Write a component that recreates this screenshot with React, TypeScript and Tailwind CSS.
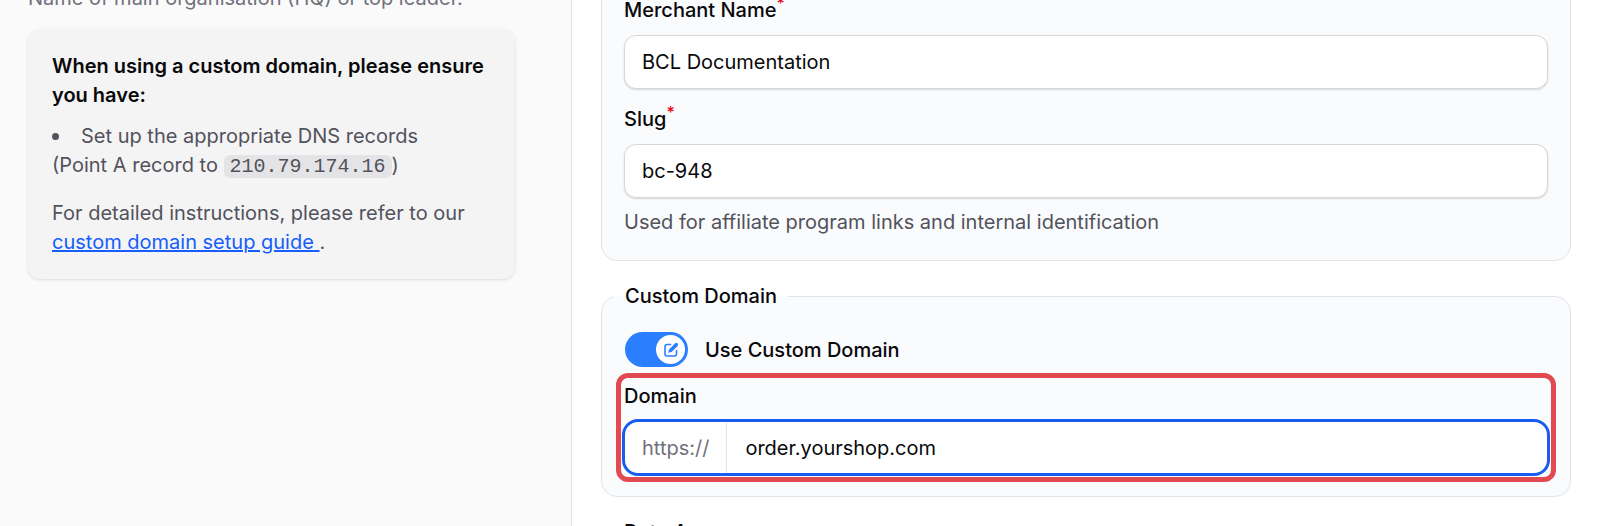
import { useState } from "react";
import type { ReactNode } from "react";

function FieldLabel({ htmlFor, required, children }: { htmlFor: string; required?: boolean; children: ReactNode }) {
  return (
    <label htmlFor={htmlFor} className="block text-xl leading-7 font-medium text-zinc-950">
      {children}
      {required && <sup className="text-base leading-none text-red-600">*</sup>}
    </label>
  );
}

function TextField({ id, label, defaultValue }: { id: string; label: string; defaultValue: string }) {
  return (
    <div className="flex flex-col gap-[11px]">
      <FieldLabel htmlFor={id} required>
        {label}
      </FieldLabel>
      <input
        id={id}
        type="text"
        defaultValue={defaultValue}
        className="h-[54px] w-full rounded-xl border border-[#d8d8da] bg-white px-[17px] text-xl text-zinc-950 shadow-[0_1px_2px_rgba(0,0,0,0.15)] outline-none"
      />
    </div>
  );
}

function EditToggle({ checked, onChange }: { checked: boolean; onChange: (value: boolean) => void }) {
  return (
    <label className="flex items-center gap-[17px] text-xl leading-7 font-medium text-zinc-950">
      <input
        type="checkbox"
        role="switch"
        checked={checked}
        onChange={(e) => onChange(e.target.checked)}
        className="peer sr-only"
      />
      <span className="flex h-[35px] w-[63px] items-center rounded-full bg-gray-300 px-[3px] peer-checked:justify-end peer-checked:bg-[#2b7fff]">
        <span className="flex size-[29px] items-center justify-center rounded-full bg-white">
          <svg viewBox="0 0 16 16" className="size-4" fill="none" stroke="#2b7fff">
            <path
              d="M7.5 2.5H4A2 2 0 0 0 2 4.5V12a2 2 0 0 0 2 2h7.500a2 2 0 0 0 2-2V8.500"
              strokeWidth="1.600"
              strokeLinecap="round"
            />
            <path d="M12 1.400a1.800 1.800 0 0 1 2.600 2.600L8.600 10 5.200 10.800 6 7.400Z" fill="#2b7fff" stroke="none" />
          </svg>
        </span>
      </span>
      Use Custom Domain
    </label>
  );
}

export default function App() {
  const [useCustomDomain, setUseCustomDomain] = useState(true);

  return (
    <div className="flex h-screen overflow-hidden bg-white font-['Inter',sans-serif]">
      <aside className="w-[571px] shrink-0 bg-[#fafafa] pr-[56px] pl-7">
        <p className="-mt-4 text-xl leading-7 text-zinc-500">Name of main organisation (HQ) or top leader.</p>
        <div className="mt-[17px] rounded-xl bg-[#f4f4f4] px-6 pt-[23px] pb-[22px] text-xl leading-[29px] text-zinc-600 shadow-[0_1px_3px_rgba(0,0,0,0.12)]">
          <h2 className="font-semibold text-zinc-950">When using a custom domain, please ensure you have:</h2>
          <ul className="mt-[11px] list-inside list-disc marker:text-[21px]">
            <li>
              Set up the appropriate DNS records
              <br />
              (Point A record to{" "}
              <code className="rounded-md bg-zinc-200 px-[6px] font-['Liberation_Mono',monospace] text-xl">
                210.79.174.16
              </code>
              )
            </li>
          </ul>
          <p className="mt-[18px]">
            For detailed instructions, please refer to our{" "}
            <a href="#guide" className="text-[#155dfc] underline">
              custom domain setup guide{" "}
            </a>
            .
          </p>
        </div>
      </aside>

      <main className="min-w-0 flex-1 border-l border-zinc-200 px-[29px]">
        <section className="-mt-[25px] rounded-b-2xl border border-zinc-200 bg-[#fafbfc] px-[22px] pt-5 pb-6">
          <div className="flex flex-col gap-4">
            <TextField id="merchant-name" label="Merchant Name" defaultValue="BCL Documentation" />
            <TextField id="slug" label="Slug" defaultValue="bc-948" />
          </div>
          <p className="mt-[10px] text-xl leading-7 text-zinc-600">
            Used for affiliate program links and internal identification
          </p>
        </section>

        <fieldset className="mt-[21px] rounded-2xl border border-zinc-200 bg-[#fafbfc] px-3 pb-[14px]">
          <legend className="px-[11px] text-xl leading-7 font-medium text-zinc-950">Custom Domain</legend>
          <div className="mt-[22px] px-[11px]">
            <EditToggle checked={useCustomDomain} onChange={setUseCustomDomain} />
          </div>
          <div className="mx-[2px] mt-[6px] rounded-xl border-5 border-[#e04a50] px-[1px] pt-1 pb-[1px]">
            <div className="px-[2px]">
              <FieldLabel htmlFor="domain">Domain</FieldLabel>
            </div>
            <div className="mt-[9px] flex h-[57px] rounded-2xl border-3 border-[#1a5cee] bg-white text-xl">
              <span className="flex items-center border-r border-zinc-200 px-[17px] text-zinc-500">https://</span>
              <input
                id="domain"
                type="text"
                defaultValue="order.yourshop.com"
                className="min-w-0 flex-1 rounded-r-2xl px-[18px] text-zinc-950 outline-none"
              />
            </div>
          </div>
        </fieldset>

        <h2 className="mt-[21px] px-[23px] text-xl leading-7 font-medium text-zinc-950">Data Area</h2>
      </main>
    </div>
  );
}
